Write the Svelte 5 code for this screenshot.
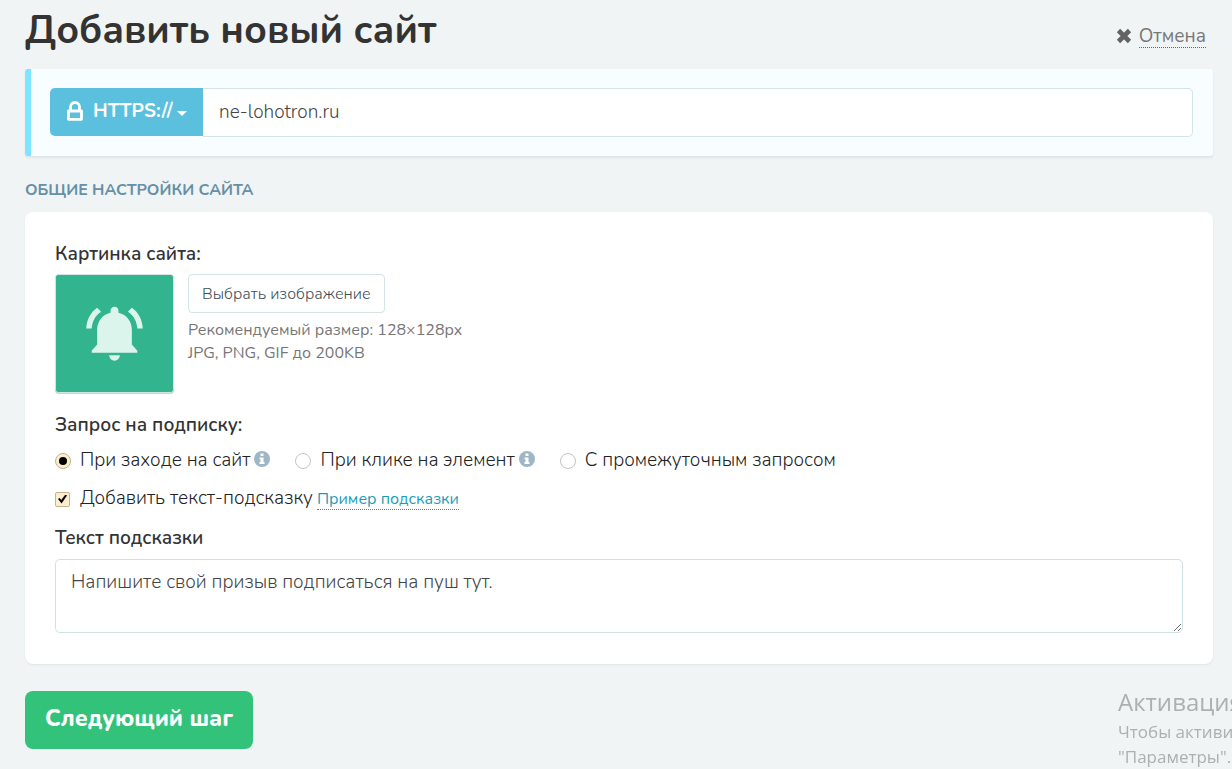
<script>
	let protocol = 'https';
	let domain = 'ne-lohotron.ru';
	let requestType = 'enter';
	let withHint = true;
	let hintText = 'Напишите свой призыв подписаться на пуш тут.';

	const requestTypes = [
		{ value: 'enter', label: 'При заходе на сайт', info: true },
		{ value: 'click', label: 'При клике на элемент', info: true },
		{ value: 'middle', label: 'С промежуточным запросом', info: false }
	];
</script>

<main class="page">
	<header class="header">
		<h1>Добавить новый сайт</h1>
		<a class="cancel" href="#cancel">
			<svg width="16" height="16" viewBox="0 0 16 16" aria-hidden="true">
				<path d="M2.500 2.500 L13.500 13.500 M13.500 2.500 L2.500 13.500" stroke="#636363" stroke-width="4.6" />
			</svg>
			<span>Отмена</span>
		</a>
	</header>

	<form on:submit|preventDefault>
		<div class="url-panel">
			<label class="protocol">
				<svg width="16" height="20" viewBox="0 0 16 20" aria-hidden="true">
					<path
						d="M1.500 10 H14.500 V18.300 H1.500 Z M3.500 10 V6 A4.500 4.500 0 0 1 12.500 6 V10"
						fill="none"
						stroke="#fff"
						stroke-width="2.800"
						stroke-linejoin="round"
					/>
				</svg>
				<select bind:value={protocol} aria-label="Протокол">
					<option value="https">HTTPS://</option>
					<option value="http">HTTP://</option>
				</select>
				<svg class="caret" width="10" height="5" viewBox="0 0 10 5" aria-hidden="true">
					<path d="M0 0 H10 L5 5 Z" fill="#fff" />
				</svg>
			</label>
			<input class="domain" type="text" aria-label="Адрес сайта" bind:value={domain} />
		</div>

		<h2>Общие настройки сайта</h2>

		<section class="card">
			<h3>Картинка сайта:</h3>
			<div class="picture-row">
				<svg class="picture" viewBox="0 0 118 118" role="img" aria-label="Колокольчик">
					<rect width="118" height="118" fill="#32b58f" />
					<g fill="#dcf5ec">
						<path
							d="M59 32 C56.500 32 55 33.700 55 36 V38 C46.500 40 41.500 47 41.500 55 V70 L36 76.500 V78.500 H82 V76.500 L76.500 70 V55 C76.500 47 71.500 40 63 38 V36 C63 33.700 61.500 32 59 32 Z"
						/>
						<path d="M53.500 81 H64.500 C64 84.500 62 86.500 59 86.500 S54 84.500 53.500 81 Z" />
						<path d="M41.500 33 L45.500 37 C39.500 41 36.500 46.500 36 54 H30.500 C31 45 34.500 38 41.500 33 Z" />
						<path d="M76.500 33 L72.500 37 C78.500 41 81.500 46.500 82 54 H87.500 C87 45 83.500 38 76.500 33 Z" />
					</g>
				</svg>
				<div class="picture-info">
					<button class="choose" type="button">Выбрать изображение</button>
					<p>Рекомендуемый размер: 128×128px<br />JPG, PNG, GIF до 200KB</p>
				</div>
			</div>

			<h3>Запрос на подписку:</h3>
			<div class="radios">
				{#each requestTypes as type}
					<label class="option">
						<input type="radio" name="request" value={type.value} bind:group={requestType} />
						<span>{type.label}</span>
						{#if type.info}
							<svg class="info" width="16" height="16" viewBox="0 0 16 16" aria-hidden="true">
								<circle cx="8" cy="8" r="8" fill="#9fb6c7" />
								<path d="M6.500 2.500 H9.500 V5 H6.500 Z M5.500 6.500 H9.500 V11 H10.500 V13 H5.500 V11 H6.500 V8.200 H5.500 Z" fill="#fff" />
							</svg>
						{/if}
					</label>
				{/each}
			</div>

			<div class="hint-row">
				<label class="option">
					<input type="checkbox" bind:checked={withHint} />
					<span>Добавить текст-подсказку</span>
				</label>
				<a class="example" href="#example">Пример подсказки</a>
			</div>

			<label class="title" for="hint">Текст подсказки</label>
			<textarea id="hint" bind:value={hintText}></textarea>
		</section>

		<button class="next" type="submit">Следующий шаг</button>
	</form>
</main>

<aside class="activation">
	<strong>Активация</strong>
	<p>Чтобы активи<br />"Параметры".</p>
</aside>

<style>
	:global(body) {
		background: #f0f4f5;
	}

	* {
		box-sizing: border-box;
	}

	.page,
	input,
	select,
	textarea,
	button {
		font-family: Nunito, 'Open Sans', 'Noto Sans', sans-serif;
		font-weight: 300;
	}

	.page {
		padding: 0 19px 20px 25px;
		color: #333;
		font-size: 19px;
	}

	.header {
		display: flex;
		justify-content: space-between;
		height: 69px;
		padding-right: 7px;
	}

	h1 {
		margin: 0;
		font-size: 39px;
		font-weight: 700;
		line-height: 62px;
	}

	.cancel {
		display: flex;
		align-items: center;
		gap: 7px;
		height: 24px;
		margin-top: 24px;
		color: #777;
		font-weight: 400;
		text-decoration: none;
	}

	.cancel span {
		padding-top: 1px;
		border-bottom: 1px dotted #666;
		line-height: 22px;
	}

	.url-panel {
		display: flex;
		padding: 19px 20px 19px 19px;
		border-left: 6px solid #7de5ff;
		border-radius: 3px;
		background: #f8fdff;
		box-shadow: 0 2px 2px #dfe5e8;
	}

	.protocol {
		display: flex;
		align-items: center;
		justify-content: center;
		gap: 10px;
		width: 153px;
		height: 48px;
		padding: 0 0 3px 1px;
		border-radius: 5px 0 0 5px;
		background: #5bc0de;
	}

	select {
		appearance: none;
		padding: 0;
		border: 0;
		background: none;
		color: #fff;
		font-size: 19px;
		font-weight: 700;
	}

	option {
		color: #333;
	}

	.caret {
		margin: 6px 0 0 -6px;
	}

	.domain {
		flex: 1;
		min-width: 0;
		height: 49px;
		padding: 0 16px 2px;
		border: 1px solid #d2e4e4;
		border-left-width: 0;
		border-radius: 0 5px 5px 0;
		background: #fff;
		color: #444;
		font-size: 19px;
	}

	h2 {
		margin: 22px 0 10px;
		color: #6590a5;
		font-size: 16px;
		font-weight: 700;
		line-height: 24px;
		text-transform: uppercase;
	}

	.card {
		padding: 30px 30px 31px;
		border-radius: 8px;
		background: #fff;
		box-shadow: 0 1px 2px #dde4e7;
	}

	h3,
	.title {
		display: block;
		margin: 0 0 8px;
		font-size: 19px;
		font-weight: 600;
		line-height: 24px;
	}

	.title {
		margin-bottom: 9px;
	}

	.picture-row {
		display: flex;
		gap: 14px;
		margin-bottom: 20px;
	}

	.picture {
		width: 119px;
		height: 119px;
		border: 1px solid #d2e4e4;
		border-radius: 4px;
		background: #32b58f;
		box-shadow: 0 1px 1px #c5cfcc;
	}

	.choose {
		height: 39px;
		padding: 0 13px;
		border: 1px solid #d2e4e4;
		border-radius: 4px;
		background: #fff;
		color: #3d4d55;
		font-size: 16px;
	}

	.picture-info p {
		margin: 6px 0 0;
		color: #777;
		font-size: 16px;
		font-weight: 400;
		line-height: 23px;
	}

	.radios {
		display: flex;
		flex-wrap: wrap;
		gap: 25px;
		padding-top: 1px;
		margin-bottom: 10px;
	}

	.option {
		display: flex;
		align-items: center;
		color: #222;
		line-height: 28px;
	}

	.option input {
		appearance: none;
		display: grid;
		place-items: center;
		width: 16px;
		height: 16px;
		margin: 2px 9px 0 0;
		border: 1px solid #c4c4c4;
		background: #fff;
	}

	.option input:checked {
		border-color: #c4b48e;
		background: #fbedcd;
	}

	.option input[type='radio'] {
		border-radius: 50%;
	}

	.option input[type='radio']:checked::before {
		content: '';
		width: 8px;
		height: 8px;
		border-radius: 50%;
		background: #000;
	}

	.option input[type='checkbox'] {
		width: 15px;
		height: 15px;
		margin-right: 10px;
		border-radius: 2px;
	}

	.option input[type='checkbox']:checked::before {
		content: '';
		width: 9px;
		height: 9px;
		background: #000;
		clip-path: polygon(0 50%, 18% 40%, 36% 62%, 82% 0, 100% 12%, 40% 100%);
	}

	.info {
		margin: 0 0 3px 4px;
	}

	.hint-row {
		display: flex;
		flex-wrap: wrap;
		align-items: center;
		gap: 4px;
		margin-bottom: 14px;
	}

	.example {
		margin-top: 2px;
		border-bottom: 1px dotted #1a9cb7;
		color: #1a9cb7;
		font-size: 16px;
		font-weight: 400;
		line-height: 20px;
		text-decoration: none;
	}

	textarea {
		display: block;
		width: 100%;
		height: 74px;
		padding: 10px 15px;
		border: 1px solid #cfe2e1;
		border-radius: 5px;
		color: #444;
		font-size: 19px;
		line-height: 24px;
		resize: vertical;
	}

	.next {
		height: 58px;
		margin-top: 27px;
		padding: 0 20px 4px;
		border: 0;
		border-radius: 8px;
		background: #32c27a;
		color: #fff;
		font-size: 23px;
		font-weight: 800;
	}

	/* system notice lying over the corner of the page */
	.activation {
		position: fixed;
		right: 0;
		bottom: 0;
		width: 114px;
		overflow: hidden;
		color: #adb0b1;
		font-family: 'Open Sans', 'Noto Sans', sans-serif;
		white-space: nowrap;
		pointer-events: none;
	}

	.activation strong {
		display: block;
		font-size: 24px;
		font-weight: 400;
		line-height: 34px;
	}

	.activation p {
		margin: 0;
		font-size: 17px;
		line-height: 25px;
	}
</style>
